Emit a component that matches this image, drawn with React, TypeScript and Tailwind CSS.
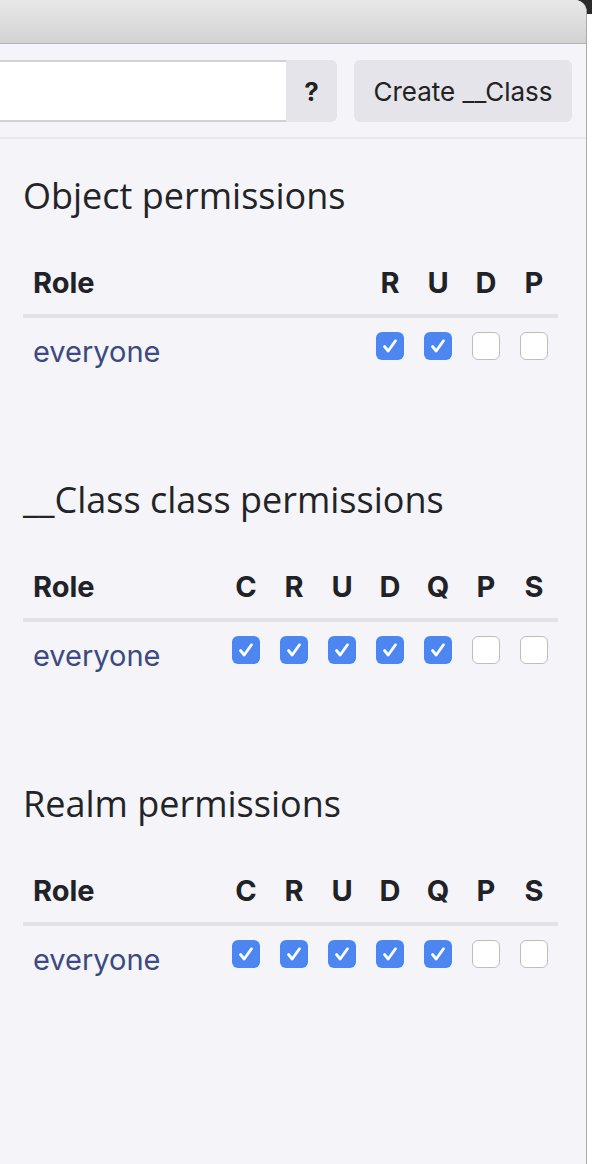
import React from "react";

const Check = ({ on }: { on: boolean }) =>
  on ? (
    <div className="w-[28px] h-[28px] rounded-[6px] bg-[#4b86f1] flex items-center justify-center">
      <svg width="20" height="20" viewBox="0 0 20 20" fill="none">
        <path d="M4.5 10.5 L8.2 15 L15.5 4.8" stroke="white" strokeWidth="2.8" strokeLinecap="round" strokeLinejoin="round" />
      </svg>
    </div>
  ) : (
    <div className="w-[28px] h-[28px] rounded-[6px] bg-white border-[1.5px] border-[#bdbdbd]" />
  );

const Section = ({ title, cols, checked }: { title: string; cols: string[]; checked: boolean[] }) => (
  <div className="flex flex-col">
    <div className="h-[40px] leading-[40px] text-[36px] text-[#222426] whitespace-nowrap" style={{ fontFamily: "'Open Sans', 'Noto Sans', sans-serif" }}>
      {title}
    </div>
    <div className="mt-[40px] w-[535px]" style={{ fontFamily: "Inter, 'Noto Sans', sans-serif" }}>
      <div className="h-[62px] pb-[4px] flex items-center border-b-4 border-[#e1e2e6]">
        <div className="flex-1 pl-[10px] text-[29px] font-bold text-[#1f2226]">Role</div>
        {cols.map((c) => (
          <div key={c} className="w-[48px] text-center text-[29px] font-bold text-[#1f2226]">
            {c}
          </div>
        ))}
      </div>
      <div className="h-[56px] flex items-center">
        <div className="flex-1 pl-[10px] text-[29px] text-[#3b4a7f] pt-[12px]">everyone</div>
        {checked.map((v, i) => (
          <div key={i} className="w-[48px] flex justify-center">
            <Check on={v} />
          </div>
        ))}
      </div>
    </div>
  </div>
);

export default function App() {
  return (
    <div className="w-[592px] h-[1164px] bg-white flex relative overflow-hidden">
      <div className="absolute right-0 top-0 w-[20px] h-[14px] bg-[#2a2a2a]" />
      <div className="relative w-[587px] h-full flex flex-col bg-[#f4f4f9] rounded-tr-[12px] border-r border-[#a9a9a9] overflow-hidden">
        <div className="h-[44px] bg-gradient-to-b from-[#e8e8e8] to-[#d2d2d2] border-b border-[#b2b2b2] shrink-0" />
        <div className="flex items-stretch pt-[16px] pb-[15px] pr-[14px] border-b-2 border-[#e6e6ec]" style={{ fontFamily: "Inter, 'Noto Sans', sans-serif" }}>
          <div className="w-[286px] h-[62px] bg-white border-y-2 border-[#cfd3d6]" />
          <div className="w-[51px] h-[62px] bg-[#e4e4ea] rounded-r-[6px] flex items-center justify-center text-[26px] font-bold text-[#222]">
            ?
          </div>
          <div className="ml-[17px] w-[218px] h-[62px] bg-[#e4e4ea] rounded-[6px] flex items-center justify-center text-[26px] text-[#222]">
            Create __Class
          </div>
        </div>
        <div className="px-[23px] pt-[37px] flex flex-col gap-[106px]">
          <Section title="Object permissions" cols={["R", "U", "D", "P"]} checked={[true, true, false, false]} />
          <Section title="__Class class permissions" cols={["C", "R", "U", "D", "Q", "P", "S"]} checked={[true, true, true, true, true, false, false]} />
          <Section title="Realm permissions" cols={["C", "R", "U", "D", "Q", "P", "S"]} checked={[true, true, true, true, true, false, false]} />
        </div>
      </div>
    </div>
  );
}
